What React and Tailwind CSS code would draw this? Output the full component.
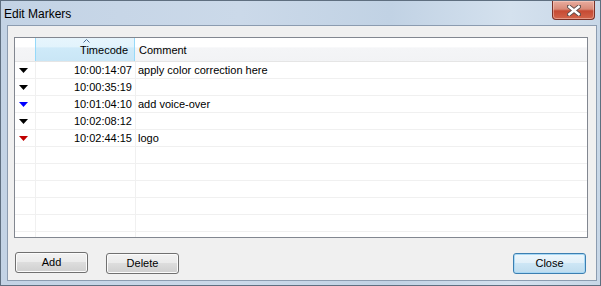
import React from 'react';

const markers = [
  { color: '#000000', tc: '10:00:14:07', comment: 'apply color correction here' },
  { color: '#000000', tc: '10:00:35:19', comment: '' },
  { color: '#0000ff', tc: '10:01:04:10', comment: 'add voice-over' },
  { color: '#000000', tc: '10:02:08:12', comment: '' },
  { color: '#c00000', tc: '10:02:44:15', comment: 'logo' },
];

const Marker = ({ color }) => (
  <svg width="9" height="5" viewBox="0 0 9 5" className="block">
    <polygon points="0,0 9,0 4.5,5" fill={color} />
  </svg>
);

const WinButton = ({ children, primary }) => (
  <button
    className={
      primary
        ? 'w-[73px] h-[21px] rounded-[3px] border border-[#3c7fb1] shadow-[inset_0_0_0_1px_#a8d8f5] bg-[linear-gradient(#eef7fc_0%,#e2f0f9_45%,#cde6f5_50%,#bfdcee_100%)] text-[11px] text-black'
        : 'w-[73px] h-[21px] rounded-[3px] border border-[#707070] shadow-[inset_0_0_0_1px_#fbfbfb] bg-[linear-gradient(#f2f2f2_0%,#ebebeb_45%,#dddddd_50%,#cfcfcf_100%)] text-[11px] text-black'
    }
  >
    {children}
  </button>
);

const CloseX = () => (
  <div className="mr-[5px] w-[43px] h-[19px] rounded-b-[4px] border border-t-0 border-[#7a3127] bg-[linear-gradient(#e9ad9f_0%,#d88a78_45%,#c64a33_55%,#d2654b_100%)] shadow-[inset_0_0_0_1px_rgba(255,220,210,0.45)] flex items-center justify-center">
    <svg width="14" height="11" viewBox="0 0 14 11">
      <path d="M2 1.5 L12 9.5 M12 1.5 L2 9.5" stroke="#5a4a48" strokeWidth="4.2" strokeLinecap="square" />
      <path d="M2.3 1.8 L11.7 9.2 M11.7 1.8 L2.3 9.2" stroke="#ffffff" strokeWidth="2.4" strokeLinecap="square" />
    </svg>
  </div>
);

export default function App() {
  const emptyRows = Array.from({ length: 6 });
  return (
    <div
      className="w-[601px] h-[286px] overflow-hidden border border-[#5f6f80] bg-[linear-gradient(90deg,#c3d3e5_0%,#cbd9e9_40%,#c1d2e4_65%,#d4e1ee_85%,#c8d7e7_100%)] flex flex-col"
      style={{ fontFamily: '"Liberation Sans", Arial, sans-serif' }}
    >
      <div className="h-[24px] flex items-start justify-between">
        <div className="pl-[3px] pt-[6px] text-[12px] text-black leading-[14px]">Edit Markers</div>
        <CloseX />
      </div>
      <div className="flex-1 ml-[6px] mr-[3px] mb-[4px] border border-[#8c9cb0] bg-[#f0f0f0] flex flex-col pt-[11px] pl-[6px] pr-[8px]">
        <div className="h-[201px] border border-[#828790] bg-white overflow-hidden text-[11px] text-black">
          <div className="h-[24px] flex border-b border-[#e5e5e5] bg-[linear-gradient(#ffffff_0%,#ffffff_40%,#f4f5f7_42%,#f2f3f5_100%)]">
            <div className="w-[21px] border-r border-[#e4e6ea]" />
            <div className="relative w-[100px] border-x border-[#96d9f9] -ml-px bg-[linear-gradient(#e7f5fd_0%,#e2f3fc_40%,#cfeaf9_42%,#c9e6f6_100%)] flex items-center justify-end pr-[6px] pt-[2px]">
              <svg width="7" height="4" viewBox="0 0 7 4" className="absolute left-[47px] top-[1px]">
                <path d="M0.5 3.5 L3.5 0.5 L6.5 3.5" fill="none" stroke="#4d6e96" strokeWidth="1" />
              </svg>
              Timecode
            </div>
            <div className="flex-1 flex items-center pl-[4px] pt-[2px]">Comment</div>
          </div>
          {markers.map((m, i) => (
            <div key={i} className="h-[17px] flex border-b border-[#f0f0f0]">
              <div className="w-[21px] border-r border-[#f0f0f0] flex items-center pl-[4px] pt-px">
                <Marker color={m.color} />
              </div>
              <div className="w-[100px] border-r border-[#f0f0f0] flex items-center justify-end pr-[3px] pt-px">{m.tc}</div>
              <div className="flex-1 flex items-center pl-[2px] pt-px">{m.comment}</div>
            </div>
          ))}
          {emptyRows.map((_, i) => (
            <div key={i} className="h-[17px] flex border-b border-[#f0f0f0]">
              <div className="w-[21px] border-r border-[#f0f0f0]" />
              <div className="w-[100px] border-r border-[#f0f0f0]" />
              <div className="flex-1" />
            </div>
          ))}
        </div>
        <div className="mt-[12px] flex items-center pl-[1px] pr-[2px]">
          <WinButton>Add</WinButton>
          <div className="ml-[18px]">
            <WinButton>Delete</WinButton>
          </div>
          <div className="ml-auto">
            <WinButton primary>Close</WinButton>
          </div>
        </div>
      </div>
    </div>
  );
}
